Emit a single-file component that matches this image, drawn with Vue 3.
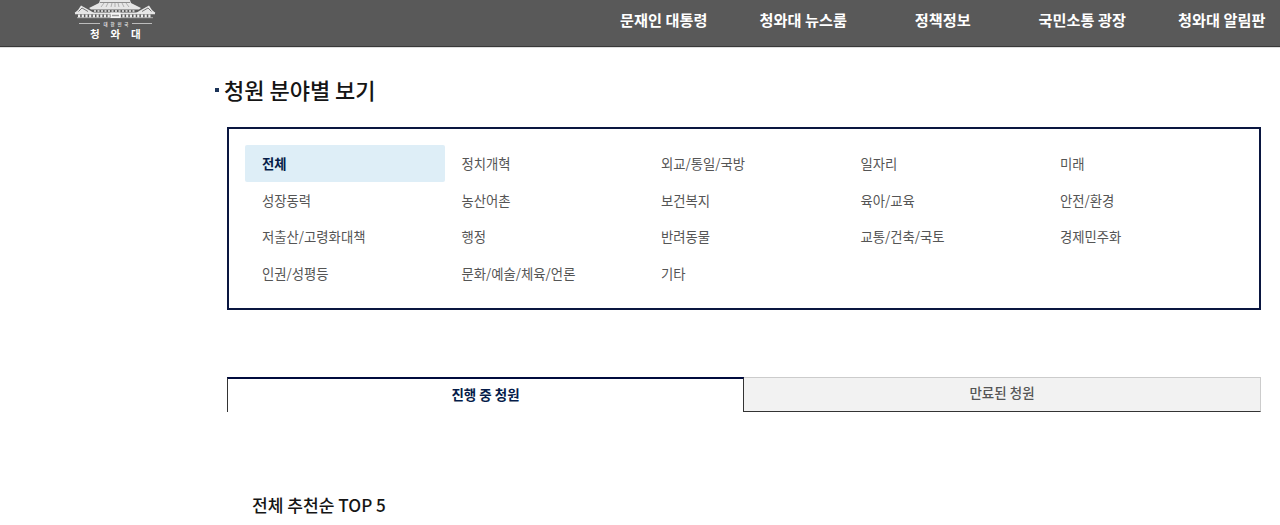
<template>
  <header class="header">
    <a class="logo">
      <svg width="84" height="42" viewBox="0 0 84 42">
        <g fill="#e6e6e6">
          <path d="M27 0h30l1 3 10 5-2 1.500H18L16 8l10-5z" />
          <path d="M1.500 13 5 10l3-4.500 9 5 4 2.500zM82.500 13 79 10l-3-4.500-9 5-4 2.500z" />
          <path d="M2 12.500h80v1.700H2z" />
        </g>
        <g stroke="#777" fill="none">
          <path d="M27 2.500h30" stroke-width=".8" />
          <path d="M5.500 11.500 9 8l6 3.500M69 11.500l6-3.500 3.500 3.500" />
          <path d="M28 7l3-4M33 7l2-4M38 7l1-4M42 7V3M46 7l-1-4M51 7l-2-4M56 7l-3-4" stroke-width=".5" />
        </g>
        <path d="M21 11h42" stroke="#c6c6c6" stroke-width="2" stroke-dasharray="2 1.500" />
        <path d="M5 16h74" stroke="#eee" stroke-width="3" stroke-dasharray="2.200 1.500" />
        <path d="M4 17.700h76" stroke="#c4c4c4" stroke-width=".8" />
        <path d="M37.500 12.500h10v5.500h-10z" fill="#f5f5f5" />
        <path d="M39 15.500h7" stroke="#999" stroke-width="1.500" />
        <path d="M6 23.500h21M59 23.500h20" stroke="#bcbcbc" />
        <text class="logo-sub" x="30.500" y="25.500" textLength="25">대한민국</text>
        <text class="logo-name" x="17" y="37.500">청</text>
        <text class="logo-name" x="37.500" y="37.500">와</text>
        <text class="logo-name" x="58" y="37.500">대</text>
      </svg>
    </a>
    <nav class="gnb">
      <a v-for="menu in menus" :key="menu">{{ menu }}</a>
    </nav>
  </header>

  <main class="content">
    <h2 class="title">청원 분야별 보기</h2>

    <ul class="category">
      <li
        v-for="category in categories"
        :key="category"
        :class="{ active: category === selected }"
        @click="selected = category"
      >
        {{ category }}
      </li>
    </ul>

    <div class="tabs">
      <button
        v-for="(tab, index) in tabs"
        :key="tab"
        :class="{ on: currentTab === index }"
        @click="currentTab = index"
      >
        {{ tab }}
      </button>
    </div>

    <h3 class="top-title">{{ selected }} 추천순 TOP 5</h3>
  </main>
</template>

<script setup>
import { ref } from 'vue'

const menus = ['문재인 대통령', '청와대 뉴스룸', '정책정보', '국민소통 광장', '청와대 알림판']

const categories = [
  '전체', '정치개혁', '외교/통일/국방', '일자리', '미래',
  '성장동력', '농산어촌', '보건복지', '육아/교육', '안전/환경',
  '저출산/고령화대책', '행정', '반려동물', '교통/건축/국토', '경제민주화',
  '인권/성평등', '문화/예술/체육/언론', '기타'
]

const tabs = ['진행 중 청원', '만료된 청원']

const selected = ref('전체')
const currentTab = ref(0)
</script>

<style>
body {
  background: #fff;
  font-family: 'Noto Sans CJK KR', sans-serif;
  overflow: hidden;
}
</style>

<style scoped>
.header {
  box-sizing: border-box;
  display: flex;
  height: 47px;
  background: #595959;
  border-bottom: 1px solid #383838;
  box-shadow: 0 1px 0 #dedede;
  overflow-x: clip;
}

.logo {
  flex: none;
  width: 521px;
  padding-left: 73px;
}

.logo svg {
  display: block;
}

.logo-sub {
  fill: #ddd;
  font-family: 'Noto Sans CJK KR', sans-serif;
  font-size: 4.5px;
  font-weight: 700;
}

.logo-name {
  fill: #fff;
  font-family: 'Noto Sans CJK KR', sans-serif;
  font-size: 10.5px;
  font-weight: 700;
}

.gnb {
  flex: none;
  display: grid;
  grid-template-columns: repeat(5, 139.5px);
  height: 38px;
  line-height: 38px;
}

.gnb a {
  color: #fff;
  font-size: 15.2px;
  font-weight: 700;
  text-align: center;
  white-space: nowrap;
}

.content {
  width: 1034px;
  margin-left: 227px;
}

.title {
  display: flex;
  align-items: center;
  gap: 5px;
  height: 32px;
  margin: 26px 0 22px -12px;
  color: #151515;
  font-size: 22px;
  font-weight: 500;
  line-height: 32px;
}

.title::before {
  content: '';
  width: 4px;
  height: 4px;
  margin-top: 2px;
  background: #1c3358;
}

.category {
  box-sizing: border-box;
  display: grid;
  grid-template-columns: repeat(5, 199.5px);
  grid-auto-rows: 36.6px;
  height: 183px;
  margin: 0;
  padding: 16px;
  border: 2px solid #0a1640;
  list-style: none;
}

.category li {
  padding-left: 17px;
  border-radius: 2px;
  color: #555;
  font-size: 13.35px;
  line-height: 38.6px;
}

.category .active {
  background: #deeef7;
  color: #051c49;
  font-weight: 700;
}

.category li,
.tabs button {
  cursor: pointer;
}

.tabs {
  display: grid;
  grid-template-columns: 517px 517px;
  height: 35px;
  margin-top: 67px;
}

.tabs button {
  padding: 0 0 6px;
  border: 1px solid #ccc;
  border-bottom-color: #333;
  border-left: 0;
  background: #f2f2f2;
  color: #555;
  font-family: inherit;
  font-size: 13.5px;
  font-weight: 500;
}

.tabs .on {
  padding: 0 0 4px;
  border-top: 2px solid #000b3d;
  border-right: 1px solid #333;
  border-bottom: 0;
  border-left: 1px solid #333;
  background: #fff;
  color: #051c49;
  font-weight: 700;
}

.top-title {
  margin: 81px 0 0 25px;
  color: #151515;
  font-size: 17.1px;
  font-weight: 500;
  line-height: 24px;
}
</style>
